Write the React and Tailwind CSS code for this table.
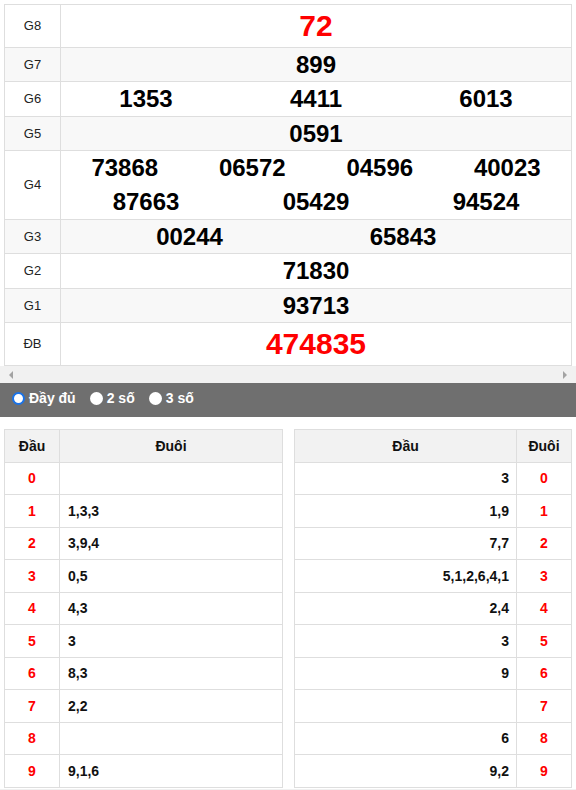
const prizes = [
  { label: "G8", h: "h-[43px]", rows: [["72"]], big: true },
  { label: "G7", h: "h-[34px]", rows: [["899"]], alt: true },
  { label: "G6", h: "h-[35px]", rows: [["1353", "4411", "6013"]] },
  { label: "G5", h: "h-[34px]", rows: [["0591"]], alt: true },
  {
    label: "G4",
    h: "h-[69px]",
    rows: [
      ["73868", "06572", "04596", "40023"],
      ["87663", "05429", "94524"],
    ],
  },
  { label: "G3", h: "h-[34px]", rows: [["00244", "65843"]], alt: true, g3: true },
  { label: "G2", h: "h-[35px]", rows: [["71830"]] },
  { label: "G1", h: "h-[34px]", rows: [["93713"]], alt: true },
  { label: "ĐB", h: "h-[43px]", rows: [["474835"]], big: true },
];

const dau = ["", "1,3,3", "3,9,4", "0,5", "4,3", "3", "8,3", "2,2", "", "9,1,6"];
const duoi = ["3", "1,9", "7,7", "5,1,2,6,4,1", "2,4", "3", "9", "", "6", "9,2"];

function Radio({ checked }) {
  return checked ? (
    <span className="w-[13px] h-[13px] rounded-full border-2 border-[#1a73e8] bg-white" />
  ) : (
    <span className="w-[13px] h-[13px] rounded-full bg-white" />
  );
}

export default function App() {
  return (
    <div className="w-[576px] min-h-[790px] bg-white font-['Liberation_Sans',Arial,sans-serif] text-[#111]">
      {/* Results table with its scroll strip */}
      <div>
        <div className="px-1 pt-1">
          <div className="border-l border-t border-[#dedede]">
            {prizes.map((p) => (
              <div
                key={p.label}
                className={`flex border-b border-[#dedede] ${p.h} ${p.alt ? "bg-[#f8f8f8]" : "bg-white"}`}
              >
                <div className="w-[56px] shrink-0 border-r border-[#dedede] flex items-center justify-center text-[13px] text-[#222]">
                  {p.label}
                </div>
                <div className="flex-1 border-r border-[#dedede] flex flex-col justify-center">
                  {p.g3 ? (
                    <div className="flex flex-1 items-center text-[24px] font-bold leading-none text-black">
                      <div className="w-[257px] text-center">00244</div>
                      <div className="w-[170px] text-center">65843</div>
                      <div className="flex-1" />
                    </div>
                  ) : (
                    p.rows.map((r, i) => (
                      <div key={i} className="flex flex-1 items-center">
                        {r.map((n) => (
                          <div
                            key={n}
                            className={`flex-1 text-center font-bold leading-none ${
                              p.big ? "text-[30px] text-[#ff0000]" : "text-[24px] text-black"
                            }`}
                          >
                            {n}
                          </div>
                        ))}
                      </div>
                    ))
                  )}
                </div>
              </div>
            ))}
          </div>
        </div>
        {/* horizontal scrollbar */}
        <div className="h-[17px] bg-[#f1f1f1] flex items-center justify-between px-[9px]">
          <span className="w-0 h-0 border-y-[4px] border-y-transparent border-r-[4px] border-r-[#a3a3a3]" />
          <span className="w-0 h-0 border-y-[4px] border-y-transparent border-l-[4px] border-l-[#a3a3a3]" />
        </div>
      </div>

      {/* Mode bar */}
      <div className="h-[34px] bg-[#6f6f6f] flex items-center pl-3 pb-[4px] text-white font-bold text-[14px]">
        <label className="flex items-center gap-[4px]">
          <Radio checked />
          <span>Đầy đủ</span>
        </label>
        <label className="flex items-center gap-[4px] ml-[14px]">
          <Radio />
          <span>2 số</span>
        </label>
        <label className="flex items-center gap-[4px] ml-[14px]">
          <Radio />
          <span>3 số</span>
        </label>
      </div>

      {/* Loto tables */}
      <div className="mt-3 flex gap-[11px] px-1">
        <div className="w-[279px] border-l border-t border-[#dedede] text-[14px] font-bold">
          <div className="flex h-[33px] border-b border-[#dedede] bg-[#f2f2f2]">
            <div className="w-[55px] border-r border-[#dedede] flex items-center justify-center">Đầu</div>
            <div className="flex-1 border-r border-[#dedede] flex items-center justify-center">Đuôi</div>
          </div>
          {dau.map((v, i) => (
            <div
              key={i}
              className={`flex border-b border-[#dedede] ${i % 2 === 0 ? "h-[32px]" : "h-[33px]"}`}
            >
              <div className="w-[55px] border-r border-[#dedede] flex items-center justify-center text-[#ff0000]">
                {i}
              </div>
              <div className="flex-1 border-r border-[#dedede] flex items-center px-2">{v}</div>
            </div>
          ))}
        </div>

        <div className="flex-1 border-l border-t border-[#dedede] text-[14px] font-bold">
          <div className="flex h-[33px] border-b border-[#dedede] bg-[#f2f2f2]">
            <div className="flex-1 border-r border-[#dedede] flex items-center justify-center">Đầu</div>
            <div className="w-[55px] border-r border-[#dedede] flex items-center justify-center">Đuôi</div>
          </div>
          {duoi.map((v, i) => (
            <div
              key={i}
              className={`flex border-b border-[#dedede] ${i % 2 === 0 ? "h-[32px]" : "h-[33px]"}`}
            >
              <div className="flex-1 border-r border-[#dedede] flex items-center justify-end pr-[7px]">{v}</div>
              <div className="w-[55px] border-r border-[#dedede] flex items-center justify-center text-[#ff0000]">
                {i}
              </div>
            </div>
          ))}
        </div>
      </div>
      <div className="mt-px h-[10px] bg-[#f0f0f0]" />
    </div>
  );
}
